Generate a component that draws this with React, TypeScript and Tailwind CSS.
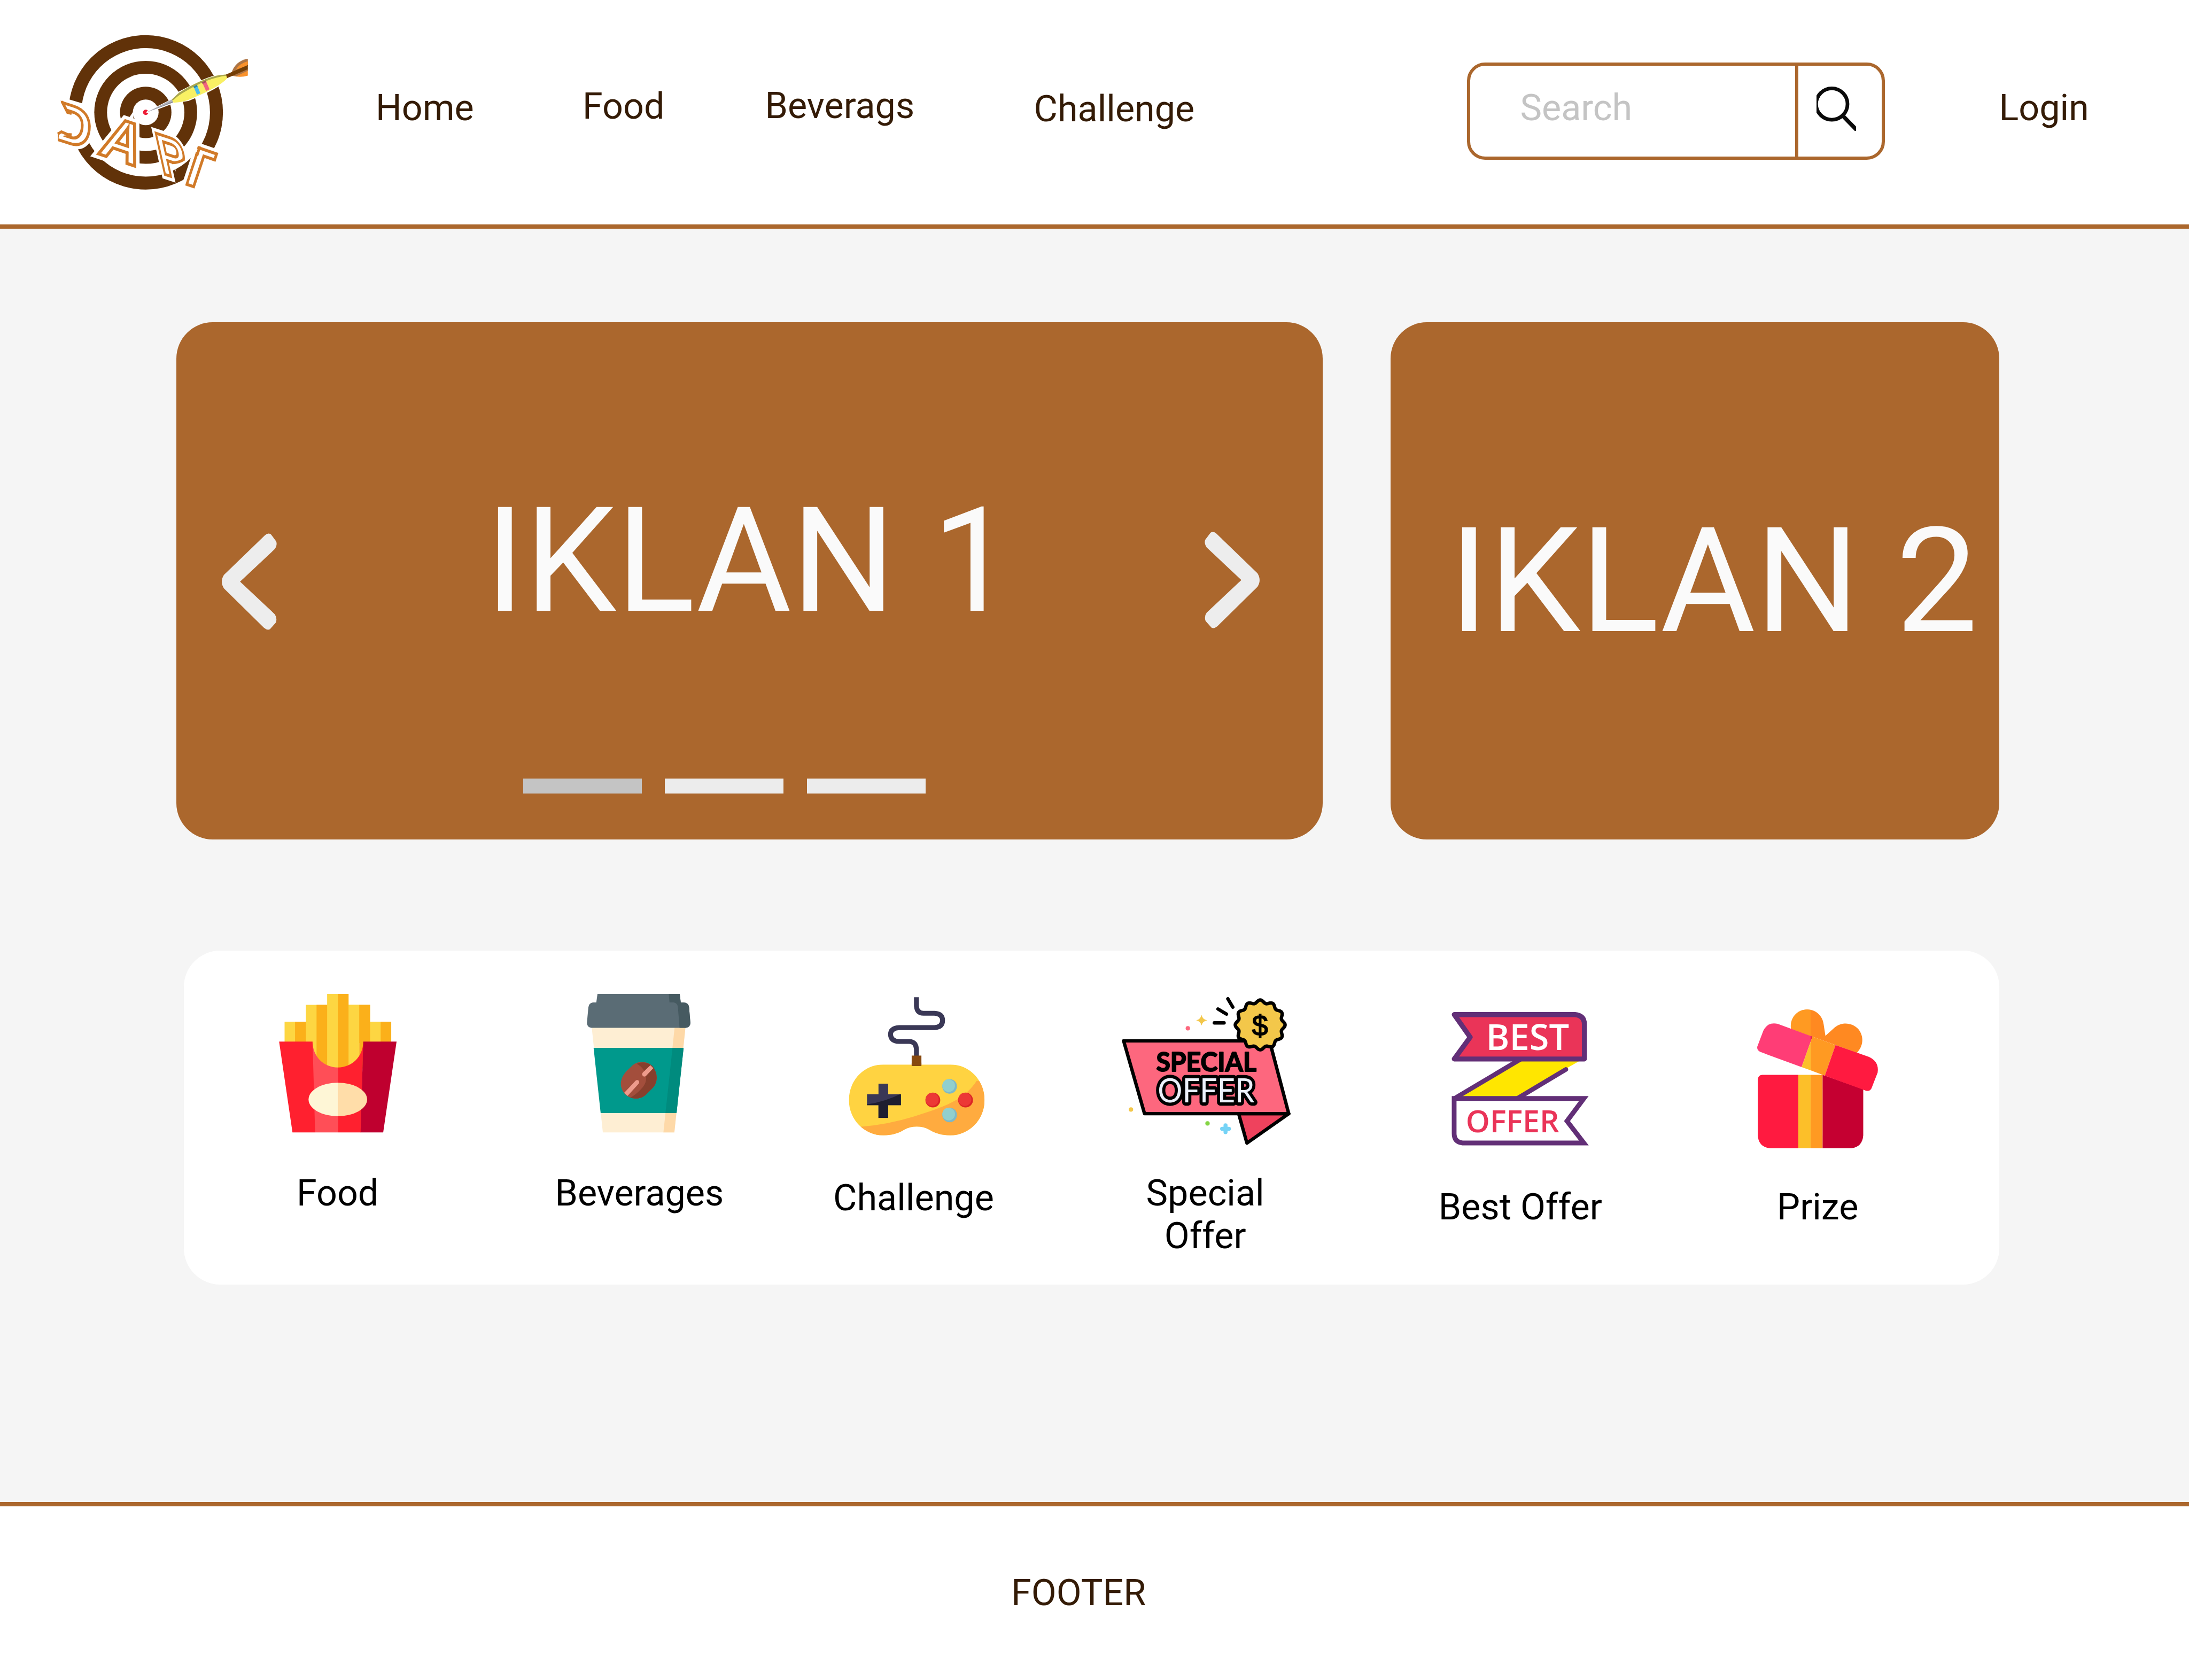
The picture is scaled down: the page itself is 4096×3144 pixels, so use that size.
import React from "react";

const LETTER_FONT = '"Liberation Sans", Arial, sans-serif';

type LogoLetterProps = {
  letter: string;
  matrix: string;
  clip?: string;
};

function LogoLetter({ letter, matrix, clip }: LogoLetterProps) {
  return (
    <g clipPath={clip}>
      <text
        transform={matrix}
        fontFamily={LETTER_FONT}
        fontWeight={700}
        fontSize={141}
        fill="#fff"
        stroke="#d17a28"
        strokeWidth={7.5}
      >
        {letter}
      </text>
    </g>
  );
}

function LogoHalo({ letter, matrix, clip }: LogoLetterProps) {
  return (
    <g clipPath={clip} aria-hidden="true">
      <text
        transform={matrix}
        fontFamily={LETTER_FONT}
        fontWeight={700}
        fontSize={141}
        fill="#fff"
        stroke="#fff"
        strokeWidth={24}
      >
        {letter}
      </text>
    </g>
  );
}

const D_MATRIX = "matrix(.95 .3 -.12 1.05 17 309)";
const A_MATRIX = "matrix(1.05 .353 -.376 1.062 136 350)";
const R_MATRIX = "matrix(.8 .26 .258 1.165 314 405.4)";
const T_MATRIX = "matrix(.946 .326 -.342 1.03 350 424)";

function Logo() {
  return (
    <svg viewBox="0 0 580 480" className="ml-[88.7px] mt-[47.8px] h-[327.7px] w-[396px] shrink-0">
      <defs>
        <clipPath id="logo-d">
          <path d="M34 190H140V340H28V296L40 302L56 300L62 282V240L52 236L35 204Z" />
        </clipPath>
        <clipPath id="logo-r">
          <path d="M270 260H390V366L340 381L352 440H270Z" />
        </clipPath>
        <clipPath id="logo-r-halo">
          <path d="M270 240H400V356L350 392L362 450H270Z" />
        </clipPath>
        <clipPath id="logo-t">
          <path d="M414.5 322L500 345L480 460H370Z" />
        </clipPath>
        <clipPath id="logo-t-halo">
          <path d="M407 300L500 330L480 470H355Z" />
        </clipPath>
      </defs>
      <g transform="translate(269 237.7)">
        <circle r="211.7" fill="#613209" />
        <circle r="176.2" fill="#fff" />
        <circle r="141" fill="#613209" />
        <circle r="106" fill="#fff" />
        <circle r="70.5" fill="#613209" />
        <circle r="35.3" fill="#fff" />
        <circle r="7.3" fill="#ed1c36" />
      </g>
      <g transform="scale(.3699 .3333)">
        <path
          d="M740 712L925 610L975 550L1085 488Q1230 405 1322 405L1484 275V410Q1430 430 1332 432Q1270 510 1040 612L930 632Z"
          fill="#fff"
          stroke="#fff"
          strokeWidth="16"
          strokeLinejoin="round"
        />
        <path d="M736 712L922 606L930 632Z" fill="#b4b5bd" />
        <path d="M736 712L930 622V632Z" fill="#8d8f98" />
        <path d="M922 606L975 550Q1190 405 1322 402L1332 432Q1270 510 1040 612Q980 635 930 632Z" fill="#f9f064" />
        <path d="M922 606L975 550Q1190 405 1322 402L1325 412Q1190 430 1030 535Q960 578 926 618Z" fill="#a9a64f" />
        <path d="M1082 502L1107 488L1132 556L1107 568Z" fill="#4cbdf0" />
        <path d="M1080 502L1107 486L1112 500L1086 514Z" fill="#2f86a4" />
        <path d="M1145 466L1172 452L1200 523L1175 538Z" fill="#f0657f" />
        <path d="M1143 467L1172 450L1178 464L1149 480Z" fill="#a5505c" />
        <path d="M1362 390Q1390 290 1484 272V330Z" fill="#ad7444" />
        <path d="M1395 362Q1420 312 1484 292V330Z" fill="#f9922c" />
        <path d="M1366 412L1484 355V411Q1430 430 1366 412Z" fill="#f9922c" />
        <path d="M1366 412L1484 355V370L1400 415Z" fill="#ad7444" />
        <path d="M1322 402L1484 324V358L1330 432Z" fill="#743e05" />
      </g>
      <ellipse cx="66" cy="269" rx="48" ry="52" fill="#fff" />
      <ellipse cx="338" cy="340" rx="24" ry="24" fill="#fff" />
      <path d="M175 340H220V372L165 350Z" fill="#fff" />
      <LogoHalo letter="D" matrix={D_MATRIX} clip="url(#logo-d)" />
      <path d="M32 194L98 214L90 226L38 210ZM60 330L104 312L84 330Z" fill="#fff" />
      <LogoHalo letter="A" matrix={A_MATRIX} />
      <LogoHalo letter="R" matrix={R_MATRIX} clip="url(#logo-r-halo)" />
      <LogoHalo letter="T" matrix={T_MATRIX} clip="url(#logo-t-halo)" />
      <LogoLetter letter="D" matrix={D_MATRIX} clip="url(#logo-d)" />
      <path d="M39 207L55 238L66 241M28 297L38 291L54 298L66 299" fill="none" stroke="#d17a28" strokeWidth="7.5" />
      <LogoLetter letter="A" matrix={A_MATRIX} />
      <LogoLetter letter="R" matrix={R_MATRIX} clip="url(#logo-r)" />
      <path d="M374.5 366Q362 376 341 376" fill="none" stroke="#d17a28" strokeWidth="7.5" />
      <LogoLetter letter="T" matrix={T_MATRIX} clip="url(#logo-t)" />
      <path d="M417.5 331L409 357" stroke="#d17a28" strokeWidth="7.5" />
    </svg>
  );
}

function SearchIcon() {
  return (
    <svg viewBox="0 0 109 122" className="ml-[34px] mt-[39px] h-[83.3px] w-[74.4px] shrink-0 overflow-hidden">
      <circle cx="42" cy="48" r="43" fill="none" stroke="#0a0a0a" strokeWidth="10" />
      <path d="M72 80L112 121" stroke="#0a0a0a" strokeWidth="11" />
    </svg>
  );
}

function Chevron({ className, flip }: { className: string; flip?: boolean }) {
  return (
    <svg viewBox="0 0 160 268" className={className}>
      <path
        d="M136 7L150 26Q152 34 146 42L48 134L146 226Q152 234 149 244L134 261Q130 263 124 258L14 150Q4 134 14 118L126 10Q131 5 136 7Z"
        transform={flip ? "matrix(-1 0 0 1 160 0)" : undefined}
        fill="#ededed"
        stroke="#ededed"
        strokeWidth="9"
        strokeLinejoin="round"
      />
    </svg>
  );
}

function FriesIcon() {
  return (
    <svg viewBox="0 0 1260 1350" className="mt-[57.4px] h-[307.2px] w-[286.7px]">
      <path d="M178 334H353V195H528V105H616V720H178Z" fill="#fdd642" />
      <path d="M616 105H704V195H881V334H1055V510H616Z" fill="#fdd642" />
      <path d="M616 195H792V720H616Z" fill="#fdd642" />
      <path d="M264 334H353V510H264ZM441 195H528V720H441ZM616 105H704V720H616ZM792 195H881V720H792ZM968 334H1055V510H968Z" fill="#fbb01a" />
      <path d="M133 498H408Q408 640 500 690L430 1245H243Z" fill="#ff202f" />
      <path d="M408 498C408 620 500 711 616 711V1245H429Z" fill="#ff4e57" />
      <path d="M825 498C825 620 732 711 616 711V1245H806Z" fill="#ff202f" />
      <path d="M825 498H1099L989 1245H803Z" fill="#bf002f" />
      <path d="M616 836A240 137 0 0 0 616 1111Z" fill="#fef6d6" />
      <path d="M616 836A240 137 0 0 1 616 1111Z" fill="#ffdda9" />
    </svg>
  );
}

function CupIcon() {
  return (
    <svg viewBox="0 0 1140 1350" className="mt-[57.4px] h-[307.2px] w-[259.4px]">
      <path d="M185 375H957L865 1245H277Z" fill="#feeed3" />
      <path d="M868 375H957L865 1245H775Z" fill="#fed9a8" />
      <path d="M201 549H941L883 1086H259Z" fill="#00998c" />
      <path d="M850 549H941L883 1086H792Z" fill="#008b7e" />
      <path d="M233 105H909L919 185H222Z" fill="#5a6c75" />
      <path d="M819 105H909L919 185H826Z" fill="#465a61" />
      <path d="M195 176H940Q982 178 986 215L997 345Q995 380 960 384H182Q148 380 146 345L158 215Q163 180 195 176Z" fill="#5a6c75" />
      <path d="M860 176H940Q982 178 986 215L997 345Q995 380 960 384H908L894 212Q890 182 860 176Z" fill="#465a61" />
      <path d="M474 738L520 694C570 650 650 660 690 705C730 760 730 830 690 876L630 936C580 980 500 975 455 925C410 870 415 800 474 738Z" fill="#a34e3c" />
      <path d="M556 680C610 655 665 675 690 705C730 760 730 830 690 876L630 936C595 967 545 973 502 958Q540 942 590 890C640 840 645 790 615 735Q595 700 556 680Z" fill="#873f2d" />
      <path d="M668 692L692 716L634 778Q620 792 606 780Q594 768 606 752Z" fill="#ee9b8c" />
      <path d="M452 920L546 820Q560 808 572 820Q580 834 570 846L480 945Z" fill="#ee9b8c" />
    </svg>
  );
}

function GamepadIcon() {
  return (
    <svg viewBox="0 0 1320 1320" className="mt-[64.2px] h-[300.4px] w-[300.4px]">
      <defs>
        <clipPath id="pad-body">
          <path d="M395 656H945C1110 656 1227 790 1227 948C1227 1110 1100 1238 945 1238C870 1238 815 1218 770 1190C710 1158 630 1158 570 1190C525 1218 470 1238 395 1238C240 1238 112 1110 112 948C112 790 230 656 395 656Z" />
        </clipPath>
        <clipPath id="pad-cross">
          <path d="M355 813H435V900H540V990H435V1095H355V990H260V900H355Z" />
        </clipPath>
      </defs>
      <path
        d="M667 102V175Q672 234 725 234H815Q882 238 882 292Q882 348 815 352H525Q455 356 454 408Q456 464 525 466H610Q664 470 667 530V590"
        fill="none"
        stroke="#3a3856"
        strokeWidth="40"
      />
      <path d="M628 582H708V670H628Z" fill="#87490f" />
      <g clipPath="url(#pad-body)">
        <path d="M100 640H1240V1250H100Z" fill="#ffd341" />
        <path d="M1162 790C1060 950 880 1010 650 1082Q430 1150 205 1168L250 1260H1260V790Z" fill="#ffab3f" />
      </g>
      <path d="M628 640H708V668H628Z" fill="#87490f" />
      <g clipPath="url(#pad-cross)">
        <path d="M250 800H550V1100H250Z" fill="#3a3856" />
        <path d="M550 890Q420 960 250 985V1100H550Z" fill="#1e1e30" />
      </g>
      <circle cx="940" cy="835" r="60" fill="#7fb8c6" />
      <circle cx="932" cy="829" r="52" fill="#91cfcd" />
      <circle cx="940" cy="1070" r="60" fill="#7fb8c6" />
      <circle cx="932" cy="1063" r="52" fill="#91cfcd" />
      <circle cx="802" cy="948" r="61" fill="#db2525" />
      <circle cx="796" cy="942" r="54" fill="#ec3836" />
      <circle cx="1071" cy="948" r="61" fill="#db2525" />
      <circle cx="1065" cy="942" r="54" fill="#ec3836" />
    </svg>
  );
}

function rosettePath(cx: number, cy: number): string {
  const points: string[] = [];
  for (let i = 0; i < 360; i += 2) {
    const angle = (i * Math.PI) / 180;
    const radius = 193 + 12 * Math.cos(12 * angle);
    points.push(`${(cx + radius * Math.cos(angle)).toFixed(1)} ${(cy + radius * Math.sin(angle)).toFixed(1)}`);
  }
  return `M${points.join("L")}Z`;
}

function SpecialOfferIcon() {
  return (
    <svg viewBox="0 0 1560 1380" className="mt-[64.2px] h-[314px] w-[355px]">
      <g stroke="#000" strokeWidth="28" strokeLinejoin="round" strokeLinecap="round">
        <path d="M1036 1060L1104 1302L1448 1060Z" fill="#ef425d" />
        <path d="M90 461H1290L1448 1060H262Z" fill="#fd677e" />
        <path d={rosettePath(1213, 330)} fill="#f3c74a" />
        <path d="M947 115L988 184M866 199L936 241M836 313H916" fill="none" />
      </g>
      <path d="M731 247Q738 285 777 292Q738 299 731 334Q722 299 687 292Q722 285 731 247Z" fill="#f3c74a" />
      <circle cx="618" cy="358" r="18" fill="#fd677e" />
      <circle cx="150" cy="1026" r="18" fill="#f3c74a" />
      <circle cx="780" cy="1140" r="18" fill="#84d444" />
      <path d="M928 1156V1212M900 1184H956" stroke="#75d3f6" strokeWidth="33" strokeLinecap="round" />
      <text x="1212" y="416" textAnchor="middle" fontFamily='"Liberation Sans", Arial, sans-serif' fontWeight={400} fontSize={236} stroke="#000" strokeWidth={8}>
        $
      </text>
      <text
        x="358"
        y="711"
        textLength="824"
        lengthAdjust="spacingAndGlyphs"
        fontFamily="Lato, sans-serif"
        fontWeight={700}
        fontSize={218}
        stroke="#000"
        strokeWidth={9}
        strokeLinejoin="round"
      >
        SPECIAL
      </text>
      <text
        x="370"
        y="969"
        textLength="796"
        lengthAdjust="spacingAndGlyphs"
        fontFamily="Lato, sans-serif"
        fontWeight={400}
        fontSize={268}
        fill="#ecf1fb"
        stroke="#000"
        strokeWidth={54}
        strokeLinejoin="round"
        paintOrder="stroke"
      >
        OFFER
      </text>
    </svg>
  );
}

function BestOfferIcon() {
  return (
    <svg viewBox="0 0 1350 1290" className="mt-[91.5px] h-[293.5px] w-[307.2px]">
      <path d="M660 500H1172L650 800H160Z" fill="#ffe600" />
      <path d="M150 805L680 490M650 815L1055 573" stroke="#622f77" strokeWidth="38" strokeLinecap="round" />
      <path d="M137 122H1130Q1207 130 1207 200V487H137L268 308Z" fill="#ea3458" stroke="#622f77" strokeWidth="41" strokeLinejoin="round" />
      <path d="M136 812H1203L1064 998L1203 1178H205Q136 1170 136 1100Z" fill="#fff" stroke="#622f77" strokeWidth="39" strokeLinejoin="miter" />
      <text x="398" y="411" textLength="684" lengthAdjust="spacingAndGlyphs" fontFamily='"Open Sans", sans-serif' fontWeight={600} fontSize={291} fill="#fff">
        BEST
      </text>
      <text x="232" y="1092" textLength="768" lengthAdjust="spacingAndGlyphs" fontFamily='"Open Sans", sans-serif' fontWeight={600} fontSize={252} fill="#ea3458">
        OFFER
      </text>
    </svg>
  );
}

function GiftIcon() {
  return (
    <svg viewBox="0 0 1200 1290" className="mt-[91.5px] h-[293.5px] w-[273.1px]">
      <path d="M150 618H448V1221H215Q120 1210 115 1115V655Q118 620 150 618Z" fill="#ff1a40" />
      <path d="M448 618H549V1221H448Z" fill="#fcbf29" />
      <path d="M549 618H648V1221H549Z" fill="#ff9a22" />
      <path d="M648 618L982 735V1115Q975 1210 885 1221H648Z" fill="#c50031" />
      <path d="M388 240C375 150 440 80 520 80C600 80 650 140 656 200L671 297L745 230C800 180 890 185 940 240C990 300 985 380 930 436Z" fill="#ff8921" />
      <path d="M388 240C375 150 440 80 520 80Q535 80 549 83V300Z" fill="#ff9a22" />
      <path d="M278 198L564 303L475 554L135 429Q105 415 111 385L160 255Q195 180 278 198Z" fill="#ff3d76" />
      <path d="M549 297L564 303L549 345Z" fill="#e01f4d" />
      <path d="M549 345V580L475 554Z" fill="#fcbf29" />
      <path d="M564 303L754 372L666 624L549 580V345Z" fill="#ff9a22" />
      <path d="M754 372L1030 470Q1115 510 1100 600L1050 728Q1035 755 1005 748L666 624Z" fill="#ff1a40" />
    </svg>
  );
}

export default function App() {
  return (
    <div className="flex h-[3144px] w-[4096px] flex-col overflow-hidden bg-[#f5f5f5] font-[Roboto,sans-serif] text-[68.27px] leading-[80px] text-black">
      <header className="flex h-[428px] shrink-0 items-start border-b-8 border-[#ab672d] bg-white text-[#341b06]">
        <Logo />
        <nav className="ml-[218.4px] flex shrink-0 items-start">
          <a className="mt-[162px] w-[387px]">Home</a>
          <a className="mt-[159px] w-[341.5px]">Food</a>
          <a className="mt-[158px] w-[503px]">Beverags</a>
          <a className="mt-[164px] w-[810.4px]">Challenge</a>
        </nav>
        <div className="mt-[117px] flex h-[182px] w-[782px] shrink-0 overflow-hidden rounded-[34px] border-6 border-[#ab672d]">
          <div className="w-[608px] shrink-0 pl-[93.5px] pt-[39px] text-[#c4c4c4]">Search</div>
          <div className="flex flex-1 items-start border-l-6 border-[#ab672d]">
            <SearchIcon />
          </div>
        </div>
        <a className="ml-[213.5px] mt-[162px]">Login</a>
      </header>

      <main className="flex h-[2383px] shrink-0 flex-col pt-[175px]">
        <div className="ml-[329.5px] flex gap-[127px]">
          <section className="flex h-[967.5px] w-[2145.5px] shrink-0 flex-col rounded-[68px] bg-[#ab672d]">
            <div className="flex h-[607px] items-start">
              <Chevron className="ml-[82px] mt-[394.4px] h-[183px] w-[109px] shrink-0" />
              <h2 className="ml-[387px] mt-[287px] w-[1343.2px] shrink-0 whitespace-nowrap text-[273.07px] leading-[320px] text-[#fafafa]">
                IKLAN 1
              </h2>
              <Chevron flip className="mt-[391px] h-[183px] w-[109px] shrink-0" />
            </div>
            <div className="ml-[649px] mt-[246.5px] flex gap-[43.5px]">
              <span className="h-[28px] w-[222px] bg-[#c4c4c4]" />
              <span className="h-[28px] w-[222px] bg-[#ececec]" />
              <span className="h-[28px] w-[222px] bg-[#ececec]" />
            </div>
          </section>
          <section className="h-[967.5px] w-[1138.5px] shrink-0 rounded-[68px] bg-[#ab672d]">
            <h2 className="ml-[109.5px] mt-[324.5px] whitespace-nowrap text-[273.07px] leading-[320px] text-[#fafafa]">IKLAN 2</h2>
          </section>
        </div>

        <section className="ml-[344px] mt-[208.5px] flex h-[625px] w-[3397px] shrink-0 items-start rounded-[68px] bg-white pl-[147.5px]">
          <div className="flex w-[573.5px] shrink-0 flex-col items-start">
            <FriesIcon />
            <p className="ml-[63.5px] mt-[49.6px]">Food</p>
          </div>
          <div className="flex w-[498.3px] shrink-0 flex-col items-start">
            <CupIcon />
            <p className="-ml-[26.5px] mt-[49.6px]">Beverages</p>
          </div>
          <div className="flex w-[518.8px] shrink-0 flex-col items-start">
            <GamepadIcon />
            <p className="-ml-[4.2px] mt-[58px]">Challenge</p>
          </div>
          <div className="flex w-[607.6px] shrink-0 flex-col items-start">
            <SpecialOfferIcon />
            <p className="ml-[62.5px] mt-[36px] text-center">
              Special
              <br />
              Offer
            </p>
          </div>
          <div className="flex w-[573.4px] shrink-0 flex-col items-start">
            <BestOfferIcon />
            <p className="ml-[2px] mt-[54.5px] whitespace-nowrap">Best Offer</p>
          </div>
          <div className="flex shrink-0 flex-col items-start">
            <GiftIcon />
            <p className="ml-[62px] mt-[54.5px]">Prize</p>
          </div>
        </section>
      </main>

      <footer className="h-[333px] shrink-0 border-t-8 border-[#ab672d] bg-white pl-[1892px] pt-[122px] text-[#341b06]">FOOTER</footer>
    </div>
  );
}
